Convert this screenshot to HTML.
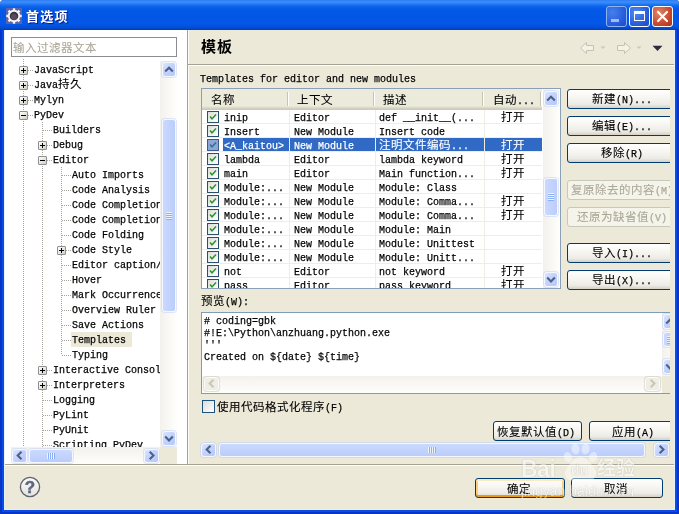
<!DOCTYPE html><html><head><meta charset="utf-8"><title>首选项</title><style>
html,body{margin:0;padding:0;background:#fff;}
body{width:679px;height:514px;overflow:hidden;position:relative;font-family:"Liberation Mono","Noto Serif CJK SC",monospace;font-size:12px;color:#000;}
div,span{box-sizing:border-box;}
.abs{position:absolute;}
.t{position:absolute;white-space:nowrap;line-height:14px;height:14px;font-size:0;}
.c{font-family:"Noto Sans CJK SC",sans-serif;font-size:11.5px;letter-spacing:.5px;font-weight:400;display:inline-block;vertical-align:top;line-height:14px;height:14px;position:relative;top:-2px;-webkit-text-stroke:.1px;}
.m{font-family:"Liberation Mono",monospace;font-size:11px;display:inline-block;vertical-align:top;line-height:14px;height:14px;transform:scaleX(.9091);transform-origin:0 0;white-space:pre;-webkit-text-stroke:.25px;}

#win{will-change:transform;position:absolute;left:0;top:0;width:679px;height:514px;background:#0c4ae6;border-radius:4px 3px 0 0;overflow:hidden;}
#title{position:absolute;left:0;top:0;width:679px;height:30px;background:linear-gradient(to bottom,#2f7df2 0%,#3c8efb 7%,#2a7ff5 12%,#0f66ee 20%,#0459e7 30%,#0356e5 60%,#0457e8 78%,#0352dc 88%,#0348cb 95%,#023bb2 100%);}
#title .cap{position:absolute;left:26px;top:8px;font:bold 13px "Liberation Sans","Noto Sans CJK SC",sans-serif;color:#fff;text-shadow:1px 1px 1px #0a1883;line-height:18px;letter-spacing:1.3px;}
#client{position:absolute;left:4px;top:30px;width:671px;height:480px;background:#ece9d8;overflow:hidden;}
#frame{position:absolute;left:4px;top:30px;width:671px;height:480px;box-shadow:inset 1px 0 0 #e6f1fb,inset -1px 0 0 #e6f1fb,inset 0 -1px 0 #e6f1fb;pointer-events:none;}
#edge{position:absolute;left:0;top:30px;width:679px;height:484px;box-shadow:inset 2px 0 0 #0735c8,inset -2px 0 0 #0735c8,inset 0 -2px 0 #0735c8;}
.tb{position:absolute;top:6px;width:21px;height:21px;border-radius:3px;border:1px solid #fff;}
.btn{position:absolute;height:20px;border:1px solid #003c74;border-radius:3px;background:linear-gradient(to bottom,#fff 0%,#f6f5f0 45%,#ecebe5 80%,#d6d0c5 100%);text-align:center;line-height:18px;white-space:nowrap;}
.btn.dis{border-color:#c9c7ba;background:#f5f4ea;color:#aca899;}
.sbv{position:absolute;width:17px;background:linear-gradient(to right,#f3f1ec,#fefefb);}
.sbh{position:absolute;height:17px;background:linear-gradient(to bottom,#f3f1ec,#fefefb);}
.sbb{position:absolute;width:14px;height:15px;border:1px solid #f4f7ff;border-radius:3px;background:linear-gradient(135deg,#dbe5fe 0%,#c3d3fd 45%,#b5c8f7 100%);box-shadow:0 0 0 1px rgba(183,202,245,.45);}
.sbb.dis{background:#efeee5;border-color:#fbfbf8;box-shadow:0 0 0 1px rgba(200,198,184,.5);}
.sbb svg{position:absolute;left:0;top:0;}
.sbb.h{width:15px;height:14px;}
.sbb.h svg{left:0;top:-1px;}
.thumb{position:absolute;border:1px solid #f4f7ff;border-radius:3px;background:linear-gradient(to right,#cbd9fd,#bacdfb);box-shadow:0 0 0 1px rgba(183,202,245,.45);}
.thumbh{position:absolute;border:1px solid #f4f7ff;border-radius:3px;background:linear-gradient(to bottom,#cbd9fd,#bacdfb);box-shadow:0 0 0 1px rgba(183,202,245,.45);}
.cb{position:absolute;width:12px;height:12px;border:1px solid #2c4f6e;background:linear-gradient(135deg,#dcdcd7,#fff);}
.cb svg{position:absolute;left:0;top:0;}
.hd{position:absolute;top:0;height:21px;background:linear-gradient(to bottom,#ebeadb 0%,#ebeadb 82%,#e2decd 86%,#d6d2c2 92%,#cbc7b8 100%);}
.hsep{position:absolute;top:3px;width:2px;height:14px;border-left:1px solid #c7c5b2;border-right:1px solid #fff;}

.gl{position:absolute;background:#efeee6;}
.dot-v{position:absolute;width:1px;background-image:linear-gradient(to bottom,#aaa59c 50%,transparent 50%);background-size:1px 2px;}
.dot-h{position:absolute;height:1px;background-image:linear-gradient(to right,#aaa59c 50%,transparent 50%);background-size:2px 1px;}
.pm{position:absolute;width:9px;height:9px;border:1px solid #8c8f94;background:linear-gradient(135deg,#fff,#d4d0c0);border-radius:1px;}
.pm i{position:absolute;left:1px;top:3px;width:5px;height:1px;background:#000;}
.pm b{position:absolute;left:3px;top:1px;width:1px;height:5px;background:#000;}
</style></head><body>
<div id="win">
<div id="title">
<svg class="abs" style="left:6px;top:8px" width="16" height="16" viewBox="0 0 16 16"><rect width="16" height="16" fill="#5c62a8"/><g fill="#f4f4f8"><circle cx="8" cy="8" r="6.2"/><g id="teeth"><rect x="6.8" y="0.3" width="2.4" height="15.4"/><rect x="0.3" y="6.8" width="15.4" height="2.4"/><rect x="6.8" y="0.3" width="2.4" height="15.4" transform="rotate(45 8 8)"/><rect x="6.8" y="0.3" width="2.4" height="15.4" transform="rotate(-45 8 8)"/></g></g><circle cx="8" cy="8" r="4.3" fill="#3a3640"/><circle cx="8" cy="9" r="3" fill="#5a4a58"/></svg>
<div class="cap">首选项</div>
<div class="tb" style="left:606px;border-color:#8fb2f0;background:radial-gradient(circle at 30% 30%,#4480ec,#2458d8 70%,#1c49c4);"><div class="abs" style="left:4px;top:12px;width:8px;height:3px;background:#fff;opacity:.55"></div></div>
<div class="tb" style="left:629px;background:radial-gradient(circle at 30% 30%,#4d8bf0,#2458d8 70%,#1c49c4);"><div class="abs" style="left:4px;top:4px;width:11px;height:10px;border:1px solid #fff;border-top:3px solid #fff"></div></div>
<div class="tb" style="left:652px;background:radial-gradient(circle at 30% 30%,#e08466,#c9482c 60%,#a8321c);"><svg class="abs" style="left:0;top:0" width="19" height="19" viewBox="0 0 19 19"><path d="M5 5 L14 14 M14 5 L5 14" stroke="#fff" stroke-width="2.2" stroke-linecap="round"/></svg></div>
</div>
<div id="edge"></div>
<div id="client">
<div class="abs" style="left:0;top:0;width:183px;height:434px;background:#fff;"></div>
<div class="abs" style="left:183px;top:0;width:1px;height:434px;background:#a5a395;"></div>
<div class="abs" style="left:184px;top:0;width:1px;height:434px;background:#fbfaf5;"></div>
<div class="abs" style="left:7px;top:7px;width:166px;height:20px;border:1px solid #8a8d91;background:#fff;"></div>
<div class="t" style="left:9px;top:12px;color:#aca899;"><span class="c">输入过滤器文本</span></div>
<div class="abs" style="left:7px;top:28px;width:149px;height:389px;overflow:hidden;">
<div class="dot-v" style="left:12px;top:1px;height:400px"></div>
<div class="dot-v" style="left:31px;top:64px;height:330px"></div>
<div class="dot-v" style="left:50px;top:109px;height:188px"></div>
<div class="dot-h" style="left:13px;top:12px;width:9px"></div>
<div class="pm" style="left:8px;top:8px"><i></i><b></b></div>
<div class="t" style="left:23px;top:5px;"><span class="m" style="width:60px">JavaScript</span></div>
<div class="dot-h" style="left:13px;top:27px;width:9px"></div>
<div class="pm" style="left:8px;top:23px"><i></i><b></b></div>
<div class="t" style="left:23px;top:20px;"><span class="m" style="width:24px">Java</span><span class="c">持久</span></div>
<div class="dot-h" style="left:13px;top:42px;width:9px"></div>
<div class="pm" style="left:8px;top:38px"><i></i><b></b></div>
<div class="t" style="left:23px;top:35px;"><span class="m" style="width:30px">Mylyn</span></div>
<div class="dot-h" style="left:13px;top:57px;width:9px"></div>
<div class="pm" style="left:8px;top:53px"><i></i></div>
<div class="t" style="left:23px;top:50px;"><span class="m" style="width:30px">PyDev</span></div>
<div class="dot-h" style="left:32px;top:72px;width:9px"></div>
<div class="t" style="left:42px;top:65px;"><span class="m" style="width:48px">Builders</span></div>
<div class="dot-h" style="left:32px;top:87px;width:9px"></div>
<div class="pm" style="left:27px;top:83px"><i></i><b></b></div>
<div class="t" style="left:42px;top:80px;"><span class="m" style="width:30px">Debug</span></div>
<div class="dot-h" style="left:32px;top:102px;width:9px"></div>
<div class="pm" style="left:27px;top:98px"><i></i></div>
<div class="t" style="left:42px;top:95px;"><span class="m" style="width:36px">Editor</span></div>
<div class="dot-h" style="left:51px;top:117px;width:9px"></div>
<div class="t" style="left:61px;top:110px;"><span class="m" style="width:72px">Auto Imports</span></div>
<div class="dot-h" style="left:51px;top:132px;width:9px"></div>
<div class="t" style="left:61px;top:125px;"><span class="m" style="width:78px">Code Analysis</span></div>
<div class="dot-h" style="left:51px;top:147px;width:9px"></div>
<div class="t" style="left:61px;top:140px;"><span class="m" style="width:90px">Code Completion</span></div>
<div class="dot-h" style="left:51px;top:162px;width:9px"></div>
<div class="t" style="left:61px;top:155px;"><span class="m" style="width:90px">Code Completion</span></div>
<div class="dot-h" style="left:51px;top:177px;width:9px"></div>
<div class="t" style="left:61px;top:170px;"><span class="m" style="width:72px">Code Folding</span></div>
<div class="dot-h" style="left:51px;top:192px;width:9px"></div>
<div class="pm" style="left:46px;top:188px"><i></i><b></b></div>
<div class="t" style="left:61px;top:185px;"><span class="m" style="width:60px">Code Style</span></div>
<div class="dot-h" style="left:51px;top:207px;width:9px"></div>
<div class="t" style="left:61px;top:200px;"><span class="m" style="width:90px">Editor caption/</span></div>
<div class="dot-h" style="left:51px;top:222px;width:9px"></div>
<div class="t" style="left:61px;top:215px;"><span class="m" style="width:30px">Hover</span></div>
<div class="dot-h" style="left:51px;top:237px;width:9px"></div>
<div class="t" style="left:61px;top:230px;"><span class="m" style="width:96px">Mark Occurrences</span></div>
<div class="dot-h" style="left:51px;top:252px;width:9px"></div>
<div class="t" style="left:61px;top:245px;"><span class="m" style="width:84px">Overview Ruler</span></div>
<div class="dot-h" style="left:51px;top:267px;width:9px"></div>
<div class="t" style="left:61px;top:260px;"><span class="m" style="width:72px">Save Actions</span></div>
<div class="dot-h" style="left:51px;top:282px;width:9px"></div>
<div class="abs" style="left:60px;top:274px;width:61px;height:15px;background:#ece9d8"></div>
<div class="t" style="left:61px;top:275px;"><span class="m" style="width:54px">Templates</span></div>
<div class="dot-h" style="left:51px;top:297px;width:9px"></div>
<div class="t" style="left:61px;top:290px;"><span class="m" style="width:36px">Typing</span></div>
<div class="dot-h" style="left:32px;top:312px;width:9px"></div>
<div class="pm" style="left:27px;top:308px"><i></i><b></b></div>
<div class="t" style="left:42px;top:305px;"><span class="m" style="width:114px">Interactive Console</span></div>
<div class="dot-h" style="left:32px;top:327px;width:9px"></div>
<div class="pm" style="left:27px;top:323px"><i></i><b></b></div>
<div class="t" style="left:42px;top:320px;"><span class="m" style="width:72px">Interpreters</span></div>
<div class="dot-h" style="left:32px;top:342px;width:9px"></div>
<div class="t" style="left:42px;top:335px;"><span class="m" style="width:42px">Logging</span></div>
<div class="dot-h" style="left:32px;top:357px;width:9px"></div>
<div class="t" style="left:42px;top:350px;"><span class="m" style="width:36px">PyLint</span></div>
<div class="dot-h" style="left:32px;top:372px;width:9px"></div>
<div class="t" style="left:42px;top:365px;"><span class="m" style="width:36px">PyUnit</span></div>
<div class="dot-h" style="left:32px;top:387px;width:9px"></div>
<div class="t" style="left:42px;top:380px;"><span class="m" style="width:90px">Scripting PyDev</span></div>
</div>
<div class="sbv" style="left:156px;top:31px;height:386px;width:17px">
<div class="sbb" style="left:2px;top:1px"><svg width="12" height="13" viewBox="0 0 12 13"><path d="M2.2 8.6 L6 4.8 L9.8 8.6" fill="none" stroke="#4d6185" stroke-width="2.1"/></svg></div>
<div class="thumb" style="left:2px;top:58px;width:14px;height:193px"><div class="abs" style="left:3px;top:50%;margin-top:-4px;width:6px;height:8px;background-image:linear-gradient(to bottom,#eef4fe 0,#eef4fe 1px,#8cb0f8 1px,#8cb0f8 2px);background-size:6px 2px;"></div></div>
<div class="sbb" style="left:2px;top:370px"><svg width="12" height="13" viewBox="0 0 12 13"><path d="M2.2 4.6 L6 8.4 L9.8 4.6" fill="none" stroke="#4d6185" stroke-width="2.1"/></svg></div>
</div>
<div class="sbh" style="left:7px;top:417px;width:149px;">
<div class="sbb h" style="left:1px;top:2px"><svg width="13" height="13" viewBox="-0.5 0 13 13"><path d="M8 2.7 L4.2 6.5 L8 10.3" fill="none" stroke="#4d6185" stroke-width="2.1"/></svg></div>
<div class="thumbh" style="left:18px;top:2px;width:44px;height:14px"><div class="abs" style="top:3px;left:50%;margin-left:-4px;height:6px;width:8px;background-image:linear-gradient(to right,#eef4fe 0,#eef4fe 1px,#8cb0f8 1px,#8cb0f8 2px);background-size:2px 6px;"></div></div>
<div class="sbb h" style="left:133px;top:2px"><svg width="13" height="13" viewBox="-0.5 0 13 13"><path d="M4.2 2.7 L8 6.5 L4.2 10.3" fill="none" stroke="#4d6185" stroke-width="2.1"/></svg></div>
</div>
<div class="abs" style="left:156px;top:417px;width:17px;height:17px;background:#ece9d8"></div>
<div class="abs" style="left:197px;top:7px;font:bold 15px 'Liberation Sans','Noto Sans CJK SC',sans-serif;letter-spacing:1px;line-height:20px;">模板</div>
<svg class="abs" style="left:575px;top:10px" width="100" height="16" viewBox="0 0 100 16"><path d="M1.5 8 L7.5 2.5 L7.5 5.5 L14.5 5.5 L14.5 10.5 L7.5 10.5 L7.5 13.5 Z" fill="#f4f2e8" stroke="#c5c2b2" stroke-width="1"/><path d="M21.5 6.5 L26.5 6.5 L24 9 Z" fill="#cbc8b8"/><path d="M51.5 8 L45.5 2.5 L45.5 5.5 L38.5 5.5 L38.5 10.5 L45.5 10.5 L45.5 13.5 Z" fill="#f4f2e8" stroke="#c5c2b2" stroke-width="1"/><path d="M57.5 6.5 L62.5 6.5 L60 9 Z" fill="#cbc8b8"/><path d="M73.5 5.8 L83.5 5.8 L78.5 11 Z" fill="#2c2c40"/></svg>
<div class="abs" style="left:184px;top:34px;width:487px;height:1px;background:#a5a395"></div>
<div class="abs" style="left:184px;top:35px;width:487px;height:1px;background:#fff"></div>
<div class="abs" style="left:184px;top:36px;width:482px;height:394px;overflow:hidden;">
<div class="t" style="left:12px;top:6px;"><span class="m" style="width:216px">Templates for editor and new modules</span></div>
<div class="abs" style="left:13px;top:22px;width:360px;height:201px;border:1px solid #8aa0b8;background:#fff;overflow:hidden;">
<div class="hd" style="left:0;width:340px;"></div>
<div class="hsep" style="left:85px"></div>
<div class="hsep" style="left:171px"></div>
<div class="hsep" style="left:280px"></div>
<div class="hsep" style="left:338px"></div>
<div class="t" style="left:9px;top:5px;"><span class="c">名称</span></div>
<div class="t" style="left:95px;top:5px;"><span class="c">上下文</span></div>
<div class="t" style="left:181px;top:5px;"><span class="c">描述</span></div>
<div class="t" style="left:291px;top:5px;"><span class="c">自动</span><span class="m" style="width:18px">...</span></div>
<div class="gl" style="left:87px;top:21px;width:1px;height:180px"></div>
<div class="gl" style="left:173px;top:21px;width:1px;height:180px"></div>
<div class="gl" style="left:282px;top:21px;width:1px;height:180px"></div>
<div class="gl" style="left:0;top:34px;width:340px;height:1px"></div>
<div class="cb" style="left:5px;top:22px;"><svg width="10" height="10" viewBox="0 0 10 10"><path d="M2 4.5 L4 6.8 L8 2.5" fill="none" stroke="#2a962a" stroke-width="1.5"/></svg></div>
<div class="t" style="left:22px;top:22px;color:#000;"><span class="m" style="width:24px">inip</span></div>
<div class="t" style="left:92px;top:22px;color:#000;"><span class="m" style="width:36px">Editor</span></div>
<div class="t" style="left:177px;top:22px;color:#000;"><span class="m" style="width:96px">def __init__(...</span></div>
<div class="t" style="left:299px;top:22px;color:#000;"><span class="c">打开</span></div>
<div class="gl" style="left:0;top:48px;width:340px;height:1px"></div>
<div class="cb" style="left:5px;top:36px;"><svg width="10" height="10" viewBox="0 0 10 10"><path d="M2 4.5 L4 6.8 L8 2.5" fill="none" stroke="#2a962a" stroke-width="1.5"/></svg></div>
<div class="t" style="left:22px;top:36px;color:#000;"><span class="m" style="width:36px">Insert</span></div>
<div class="t" style="left:92px;top:36px;color:#000;"><span class="m" style="width:60px">New Module</span></div>
<div class="t" style="left:177px;top:36px;color:#000;"><span class="m" style="width:66px">Insert code</span></div>
<div class="gl" style="left:0;top:62px;width:340px;height:1px"></div>
<div class="abs" style="left:21px;top:49px;width:66px;height:13px;background:#316ac5"></div>
<div class="abs" style="left:88px;top:49px;width:85px;height:13px;background:#316ac5"></div>
<div class="abs" style="left:174px;top:49px;width:108px;height:13px;background:#316ac5"></div>
<div class="abs" style="left:283px;top:49px;width:57px;height:13px;background:#316ac5"></div>
<div class="cb" style="left:5px;top:50px;background:#8ea6d4;border-color:#3a5a94;"><svg width="10" height="10" viewBox="0 0 10 10"><path d="M2 4.5 L4 6.8 L8 2.5" fill="none" stroke="#2f6f98" stroke-width="1.5"/></svg></div>
<div class="t" style="left:22px;top:50px;color:#fff;"><span class="m" style="width:60px">&lt;A_kaitou&gt;</span></div>
<div class="t" style="left:92px;top:50px;color:#fff;"><span class="m" style="width:60px">New Module</span></div>
<div class="t" style="left:177px;top:50px;color:#fff;"><span class="c">注明文件编码</span><span class="m" style="width:18px">...</span></div>
<div class="t" style="left:299px;top:50px;color:#fff;"><span class="c">打开</span></div>
<div class="gl" style="left:0;top:76px;width:340px;height:1px"></div>
<div class="cb" style="left:5px;top:64px;"><svg width="10" height="10" viewBox="0 0 10 10"><path d="M2 4.5 L4 6.8 L8 2.5" fill="none" stroke="#2a962a" stroke-width="1.5"/></svg></div>
<div class="t" style="left:22px;top:64px;color:#000;"><span class="m" style="width:36px">lambda</span></div>
<div class="t" style="left:92px;top:64px;color:#000;"><span class="m" style="width:36px">Editor</span></div>
<div class="t" style="left:177px;top:64px;color:#000;"><span class="m" style="width:84px">lambda keyword</span></div>
<div class="t" style="left:299px;top:64px;color:#000;"><span class="c">打开</span></div>
<div class="gl" style="left:0;top:90px;width:340px;height:1px"></div>
<div class="cb" style="left:5px;top:78px;"><svg width="10" height="10" viewBox="0 0 10 10"><path d="M2 4.5 L4 6.8 L8 2.5" fill="none" stroke="#2a962a" stroke-width="1.5"/></svg></div>
<div class="t" style="left:22px;top:78px;color:#000;"><span class="m" style="width:24px">main</span></div>
<div class="t" style="left:92px;top:78px;color:#000;"><span class="m" style="width:36px">Editor</span></div>
<div class="t" style="left:177px;top:78px;color:#000;"><span class="m" style="width:96px">Main function...</span></div>
<div class="t" style="left:299px;top:78px;color:#000;"><span class="c">打开</span></div>
<div class="gl" style="left:0;top:104px;width:340px;height:1px"></div>
<div class="cb" style="left:5px;top:92px;"><svg width="10" height="10" viewBox="0 0 10 10"><path d="M2 4.5 L4 6.8 L8 2.5" fill="none" stroke="#2a962a" stroke-width="1.5"/></svg></div>
<div class="t" style="left:22px;top:92px;color:#000;"><span class="m" style="width:60px">Module:...</span></div>
<div class="t" style="left:92px;top:92px;color:#000;"><span class="m" style="width:60px">New Module</span></div>
<div class="t" style="left:177px;top:92px;color:#000;"><span class="m" style="width:78px">Module: Class</span></div>
<div class="gl" style="left:0;top:118px;width:340px;height:1px"></div>
<div class="cb" style="left:5px;top:106px;"><svg width="10" height="10" viewBox="0 0 10 10"><path d="M2 4.5 L4 6.8 L8 2.5" fill="none" stroke="#2a962a" stroke-width="1.5"/></svg></div>
<div class="t" style="left:22px;top:106px;color:#000;"><span class="m" style="width:60px">Module:...</span></div>
<div class="t" style="left:92px;top:106px;color:#000;"><span class="m" style="width:60px">New Module</span></div>
<div class="t" style="left:177px;top:106px;color:#000;"><span class="m" style="width:96px">Module: Comma...</span></div>
<div class="t" style="left:299px;top:106px;color:#000;"><span class="c">打开</span></div>
<div class="gl" style="left:0;top:132px;width:340px;height:1px"></div>
<div class="cb" style="left:5px;top:120px;"><svg width="10" height="10" viewBox="0 0 10 10"><path d="M2 4.5 L4 6.8 L8 2.5" fill="none" stroke="#2a962a" stroke-width="1.5"/></svg></div>
<div class="t" style="left:22px;top:120px;color:#000;"><span class="m" style="width:60px">Module:...</span></div>
<div class="t" style="left:92px;top:120px;color:#000;"><span class="m" style="width:60px">New Module</span></div>
<div class="t" style="left:177px;top:120px;color:#000;"><span class="m" style="width:96px">Module: Comma...</span></div>
<div class="t" style="left:299px;top:120px;color:#000;"><span class="c">打开</span></div>
<div class="gl" style="left:0;top:146px;width:340px;height:1px"></div>
<div class="cb" style="left:5px;top:134px;"><svg width="10" height="10" viewBox="0 0 10 10"><path d="M2 4.5 L4 6.8 L8 2.5" fill="none" stroke="#2a962a" stroke-width="1.5"/></svg></div>
<div class="t" style="left:22px;top:134px;color:#000;"><span class="m" style="width:60px">Module:...</span></div>
<div class="t" style="left:92px;top:134px;color:#000;"><span class="m" style="width:60px">New Module</span></div>
<div class="t" style="left:177px;top:134px;color:#000;"><span class="m" style="width:72px">Module: Main</span></div>
<div class="gl" style="left:0;top:160px;width:340px;height:1px"></div>
<div class="cb" style="left:5px;top:148px;"><svg width="10" height="10" viewBox="0 0 10 10"><path d="M2 4.5 L4 6.8 L8 2.5" fill="none" stroke="#2a962a" stroke-width="1.5"/></svg></div>
<div class="t" style="left:22px;top:148px;color:#000;"><span class="m" style="width:60px">Module:...</span></div>
<div class="t" style="left:92px;top:148px;color:#000;"><span class="m" style="width:60px">New Module</span></div>
<div class="t" style="left:177px;top:148px;color:#000;"><span class="m" style="width:96px">Module: Unittest</span></div>
<div class="gl" style="left:0;top:174px;width:340px;height:1px"></div>
<div class="cb" style="left:5px;top:162px;"><svg width="10" height="10" viewBox="0 0 10 10"><path d="M2 4.5 L4 6.8 L8 2.5" fill="none" stroke="#2a962a" stroke-width="1.5"/></svg></div>
<div class="t" style="left:22px;top:162px;color:#000;"><span class="m" style="width:60px">Module:...</span></div>
<div class="t" style="left:92px;top:162px;color:#000;"><span class="m" style="width:60px">New Module</span></div>
<div class="t" style="left:177px;top:162px;color:#000;"><span class="m" style="width:96px">Module: Unitt...</span></div>
<div class="gl" style="left:0;top:188px;width:340px;height:1px"></div>
<div class="cb" style="left:5px;top:176px;"><svg width="10" height="10" viewBox="0 0 10 10"><path d="M2 4.5 L4 6.8 L8 2.5" fill="none" stroke="#2a962a" stroke-width="1.5"/></svg></div>
<div class="t" style="left:22px;top:176px;color:#000;"><span class="m" style="width:18px">not</span></div>
<div class="t" style="left:92px;top:176px;color:#000;"><span class="m" style="width:36px">Editor</span></div>
<div class="t" style="left:177px;top:176px;color:#000;"><span class="m" style="width:66px">not keyword</span></div>
<div class="t" style="left:299px;top:176px;color:#000;"><span class="c">打开</span></div>
<div class="gl" style="left:0;top:202px;width:340px;height:1px"></div>
<div class="cb" style="left:5px;top:190px;"><svg width="10" height="10" viewBox="0 0 10 10"><path d="M2 4.5 L4 6.8 L8 2.5" fill="none" stroke="#2a962a" stroke-width="1.5"/></svg></div>
<div class="t" style="left:22px;top:190px;color:#000;"><span class="m" style="width:24px">pass</span></div>
<div class="t" style="left:92px;top:190px;color:#000;"><span class="m" style="width:36px">Editor</span></div>
<div class="t" style="left:177px;top:190px;color:#000;"><span class="m" style="width:72px">pass keyword</span></div>
<div class="t" style="left:299px;top:190px;color:#000;"><span class="c">打开</span></div>
<div class="sbv" style="left:341px;top:0;height:199px;">
<div class="sbb" style="left:1px;top:2px"><svg width="12" height="13" viewBox="0 0 12 13"><path d="M2.2 8.6 L6 4.8 L9.8 8.6" fill="none" stroke="#4d6185" stroke-width="2.1"/></svg></div>
<div class="thumb" style="left:1px;top:89px;width:14px;height:38px"><div class="abs" style="left:3px;top:50%;margin-top:-4px;width:6px;height:8px;background-image:linear-gradient(to bottom,#eef4fe 0,#eef4fe 1px,#8cb0f8 1px,#8cb0f8 2px);background-size:6px 2px;"></div></div>
<div class="sbb" style="left:1px;top:183px"><svg width="12" height="13" viewBox="0 0 12 13"><path d="M2.2 4.6 L6 8.4 L9.8 4.6" fill="none" stroke="#4d6185" stroke-width="2.1"/></svg></div>
</div>
</div>
<div class="btn" style="left:379px;top:23px;width:112px;height:20px;"><div class="t" style="left:24px;top:3px"><span class="c">新建</span><span class="m" style="width:36px">(N)...</span></div></div>
<div class="btn" style="left:379px;top:50px;width:112px;height:20px;"><div class="t" style="left:24px;top:3px"><span class="c">编辑</span><span class="m" style="width:36px">(E)...</span></div></div>
<div class="btn" style="left:379px;top:77px;width:112px;height:20px;"><div class="t" style="left:33px;top:3px"><span class="c">移除</span><span class="m" style="width:18px">(R)</span></div></div>
<div class="btn dis" style="left:379px;top:114px;width:112px;height:20px;"><div class="t" style="left:3px;top:3px"><span class="c">复原除去的内容</span><span class="m" style="width:18px">(M)</span></div></div>
<div class="btn dis" style="left:379px;top:141px;width:112px;height:20px;"><div class="t" style="left:9px;top:3px"><span class="c">还原为缺省值</span><span class="m" style="width:18px">(V)</span></div></div>
<div class="btn" style="left:379px;top:177px;width:112px;height:20px;"><div class="t" style="left:24px;top:3px"><span class="c">导入</span><span class="m" style="width:36px">(I)...</span></div></div>
<div class="btn" style="left:379px;top:204px;width:112px;height:20px;"><div class="t" style="left:24px;top:3px"><span class="c">导出</span><span class="m" style="width:36px">(X)...</span></div></div>
<div class="t" style="left:13px;top:229px;"><span class="c">预览</span><span class="m" style="width:24px">(W):</span></div>
<div class="abs" style="left:13px;top:246px;width:480px;height:82px;border:1px solid #7f9db9;background:#fff;">
<div class="t" style="left:2px;top:1px;"><span class="m" style="width:72px"># coding=gbk</span></div>
<div class="t" style="left:2px;top:13px;"><span class="m" style="width:186px">#!E:\Python\anzhuang.python.exe</span></div>
<div class="t" style="left:2px;top:25px;"><span class="m" style="width:18px">&#x27;&#x27;&#x27;</span></div>
<div class="t" style="left:2px;top:37px;"><span class="m" style="width:156px">Created on ${date} ${time}</span></div>
<div class="sbh" style="left:0px;top:63px;width:460px;">
<div class="sbb h dis" style="left:2px;top:1px"><svg width="13" height="13" viewBox="-0.5 0 13 13"><path d="M8 2.7 L4.2 6.5 L8 10.3" fill="none" stroke="#c9c7ba" stroke-width="2.1"/></svg></div>
<div class="sbb h dis" style="left:443px;top:1px"><svg width="13" height="13" viewBox="-0.5 0 13 13"><path d="M4.2 2.7 L8 6.5 L4.2 10.3" fill="none" stroke="#c9c7ba" stroke-width="2.1"/></svg></div>
</div>
<div class="abs" style="left:460px;top:63px;width:20px;height:17px;background:#ece9d8"></div>
<div class="sbv" style="left:460px;top:0px;height:63px;">
<div class="sbb" style="left:1px;top:1px"><svg width="12" height="13" viewBox="0 0 12 13"><path d="M2.2 8.6 L6 4.8 L9.8 8.6" fill="none" stroke="#4d6185" stroke-width="2.1"/></svg></div>
<div class="thumb" style="left:1px;top:19px;width:14px;height:15px"><div class="abs" style="left:3px;top:50%;margin-top:-4px;width:6px;height:8px;background-image:linear-gradient(to bottom,#eef4fe 0,#eef4fe 1px,#8cb0f8 1px,#8cb0f8 2px);background-size:6px 2px;"></div></div>
<div class="sbb" style="left:1px;top:46px"><svg width="12" height="13" viewBox="0 0 12 13"><path d="M2.2 4.6 L6 8.4 L9.8 4.6" fill="none" stroke="#4d6185" stroke-width="2.1"/></svg></div>
</div>
</div>
<div class="abs" style="left:14px;top:334px;width:13px;height:13px;border:1px solid #1c5180;background:linear-gradient(135deg,#dcdcd7,#fff);"></div>
<div class="t" style="left:29px;top:335px;"><span class="c">使用代码格式化程序</span><span class="m" style="width:18px">(F)</span></div>
<div class="btn" style="left:305px;top:355px;width:89px;height:20px;"><div class="t" style="left:3px;top:4px"><span class="c">恢复默认值</span><span class="m" style="width:18px">(D)</span></div></div>
<div class="btn" style="left:401px;top:355px;width:90px;height:20px;"><div class="t" style="left:22px;top:4px"><span class="c">应用</span><span class="m" style="width:18px">(A)</span></div></div>
<div class="abs" style="left:12px;top:376px;width:470px;height:16px;">
<div class="sbb h" style="left:1px;top:1px"><svg width="13" height="13" viewBox="-0.5 0 13 13"><path d="M8 2.7 L4.2 6.5 L8 10.3" fill="none" stroke="#4d6185" stroke-width="2.1"/></svg></div>
<div class="thumbh" style="left:19px;top:1px;width:426px;height:14px"><div class="abs" style="top:3px;left:50%;margin-left:-4px;height:6px;width:8px;background-image:linear-gradient(to right,#eef4fe 0,#eef4fe 1px,#8cb0f8 1px,#8cb0f8 2px);background-size:2px 6px;"></div></div>
<div class="sbb h" style="left:454px;top:1px"><svg width="13" height="13" viewBox="-0.5 0 13 13"><path d="M4.2 2.7 L8 6.5 L4.2 10.3" fill="none" stroke="#4d6185" stroke-width="2.1"/></svg></div>
</div>
</div>
<div class="abs" style="left:0;top:434px;width:671px;height:1px;background:#a5a395"></div>
<div class="abs" style="left:0;top:435px;width:671px;height:1px;background:#fff"></div>
<svg class="abs" style="left:14px;top:445px" width="24" height="24" viewBox="0 0 24 24"><defs><linearGradient id="hg" x1="0" y1="0" x2="0" y2="1"><stop offset="0" stop-color="#fbfbfb"/><stop offset="1" stop-color="#e4e3dc"/></linearGradient></defs><circle cx="12" cy="12" r="9.6" fill="url(#hg)" stroke="#5d6272" stroke-width="1.3"/><text x="12" y="18" text-anchor="middle" font-family="Liberation Sans,sans-serif" font-weight="bold" font-size="17" fill="#5e6785" stroke="#5e6785" stroke-width=".5">?</text></svg>
<div class="btn" style="left:471px;top:448px;width:90px;height:20px;box-shadow:inset 0 2px 0 #fdebbd,inset 0 -2px 0 #ea9a10,inset 2px 0 0 #f9cf7c,inset -2px 0 0 #f9cf7c;"><div class="t" style="left:31px;top:4px"><span class="c">确定</span></div></div>
<div class="btn" style="left:567px;top:448px;width:92px;height:20px;"><div class="t" style="left:32px;top:4px"><span class="c">取消</span></div></div>
<div class="abs" style="left:514px;top:410px;width:130px;height:60px;opacity:.55;color:#fff;text-shadow:0 0 1px rgba(110,110,110,.9);">
<div class="abs" style="left:3px;top:17px;font:bold 23px 'Liberation Sans',sans-serif;line-height:24px;letter-spacing:-.5px;white-space:nowrap;">Bai</div>
<svg class="abs" style="left:44px;top:2px" width="36" height="40" viewBox="0 0 36 40"><g fill="#fff" opacity=".8"><ellipse cx="6" cy="15" rx="4" ry="5.2" transform="rotate(-18 6 15)"/><ellipse cx="13.5" cy="7" rx="4" ry="5.4" transform="rotate(-6 13.5 7)"/><ellipse cx="23.5" cy="7" rx="4" ry="5.4" transform="rotate(6 23.5 7)"/><ellipse cx="31" cy="15" rx="4" ry="5.2" transform="rotate(18 31 15)"/><path d="M18.5 15 C12 15 8 22 4.5 26.5 C1 31 3.5 38.5 10 38.5 C13.5 38.5 15.5 37.5 18.5 37.5 C21.5 37.5 23.5 38.5 27 38.5 C33.5 38.5 36 31 32.5 26.5 C29 22 25 15 18.5 15 Z"/></g></svg>
<div class="abs" style="left:53px;top:23px;font:bold 14px 'Liberation Sans',sans-serif;line-height:14px;color:#fff;white-space:nowrap;">du</div>
<div class="abs" style="left:79px;top:18px;font:bold 19px 'Liberation Sans','Noto Sans CJK SC',sans-serif;line-height:22px;white-space:nowrap;">经验</div>
<div class="abs" style="left:3px;top:43px;font:14px 'Liberation Sans',sans-serif;line-height:16px;white-space:nowrap;">jingyan.baidu.com</div>
</div>
</div>
<div id="frame"></div>
</div>
</body></html>
